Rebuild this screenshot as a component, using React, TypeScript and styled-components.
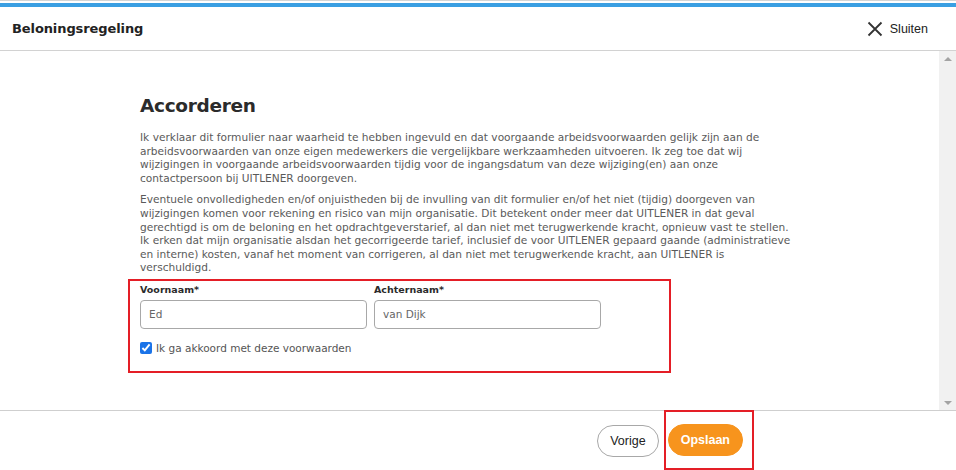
import React from "react";
import styled, { createGlobalStyle } from "styled-components";

const Global = createGlobalStyle`
  html, body { margin: 0; padding: 0; background: #fff; }
  body { font-family: "DejaVu Sans", sans-serif; }
  * { box-sizing: border-box; }
`;

const Page = styled.div`
  width: 956px;
  height: 470px;
  display: flex;
  flex-direction: column;
  overflow: hidden;
  border-top: 1px solid #d4d4d4;
`;

const Stripe = styled.div`
  height: 4px;
  margin-top: 2px;
  background: #3a9fe2;
  flex: none;
`;

const Header = styled.header`
  height: 44px;
  flex: none;
  display: flex;
  align-items: center;
  justify-content: space-between;
  padding: 0 28px 0 12px;
  border-bottom: 1px solid #d2d2d2;
`;

const Title = styled.h1`
  margin: 0;
  font-family: "DejaVu Sans", sans-serif;
  font-size: 13px;
  font-weight: 700;
  color: #222;
  letter-spacing: -0.1px;
`;

const CloseButton = styled.button`
  display: flex;
  align-items: center;
  gap: 7px;
  border: none;
  background: none;
  padding: 0;
  font-family: "Liberation Sans", Arial, sans-serif;
  font-size: 12.5px;
  color: #222;
  cursor: pointer;
`;

const Body = styled.div`
  flex: 1;
  display: flex;
  min-height: 0;
`;

const Content = styled.main`
  flex: 1;
  padding: 44px 0 0 140px;
`;

const Scrollbar = styled.div`
  width: 17px;
  flex: none;
  background: #f1f1f1;
  display: flex;
  flex-direction: column;
  justify-content: space-between;
  align-items: center;
  padding: 6px 0 5px;
`;

const Arrow = styled.div<{ $down?: boolean }>`
  width: 0;
  height: 0;
  border-left: 4px solid transparent;
  border-right: 4px solid transparent;
  ${(p) =>
    p.$down
      ? "border-top: 4px solid #a3a3a3;"
      : "border-bottom: 4px solid #a3a3a3;"}
`;

const Heading = styled.h2`
  margin: 0 0 15px;
  font-family: "DejaVu Sans", sans-serif;
  font-size: 18.5px;
  font-weight: 700;
  color: #2b2b2b;
  letter-spacing: -0.3px;
`;

const Paragraph = styled.p`
  margin: 0 0 8px;
  width: 652px;
  font-family: "DejaVu Sans", sans-serif;
  font-size: 10.6px;
  line-height: 13.6px;
  color: #5a5a5a;

  &:last-of-type {
    margin-bottom: 4px;
  }
`;

const FormBox = styled.section`
  width: 543px;
  height: 94px;
  margin-left: -12px;
  border: 2px solid #e41e26;
  padding: 3px 10px 0;
`;

const FieldRow = styled.div`
  display: flex;
  gap: 7px;
`;

const Field = styled.label`
  display: flex;
  flex-direction: column;
  gap: 4px;
  width: 227px;
`;

const Label = styled.span`
  font-family: "DejaVu Sans", sans-serif;
  font-size: 9.5px;
  font-weight: 600;
  color: #2b2b2b;
  line-height: 12px;
`;

const Input = styled.input`
  height: 29px;
  width: 100%;
  border: 1px solid #a8a8a8;
  border-radius: 4px;
  padding: 0 8px;
  font-family: "DejaVu Sans", sans-serif;
  font-size: 10.5px;
  color: #666;
  outline: none;
`;

const CheckRow = styled.label`
  display: flex;
  align-items: center;
  gap: 4px;
  margin-top: 13px;
  font-family: "DejaVu Sans", sans-serif;
  font-size: 10.5px;
  color: #555;
`;

const Check = styled.input`
  width: 12px;
  height: 12px;
  margin: 0;
  accent-color: #1a73e8;
`;

const Footer = styled.footer`
  height: 60px;
  flex: none;
  border-top: 1px solid #cfcfcf;
  display: flex;
  align-items: center;
  justify-content: flex-end;
  padding-right: 202px;
  gap: 5px;
`;

const PillButton = styled.button<{ $primary?: boolean }>`
  height: 32px;
  padding: 0 12px;
  border-radius: 16px;
  font-family: "Liberation Sans", Arial, sans-serif;
  font-size: 12.5px;
  font-weight: ${(p) => (p.$primary ? 700 : 400)};
  color: ${(p) => (p.$primary ? "#fff" : "#222")};
  background: ${(p) => (p.$primary ? "#f7941d" : "#fff")};
  border: 1px solid ${(p) => (p.$primary ? "#f7941d" : "#a8a8a8")};
  cursor: pointer;
`;

const Highlight = styled.div`
  border: 2px solid #e41e26;
  height: 60px;
  margin-top: -1px;
  padding: 0 9px 0 2px;
  display: flex;
  align-items: center;
`;

export default function App() {
  return (
    <>
      <Global />
      <Page>
        <Stripe />
        <Header>
          <Title>Beloningsregeling</Title>
          <CloseButton>
            <svg width="16" height="16" viewBox="0 0 16 16">
              <path d="M1.5 1.5 L14.5 14.5 M14.5 1.5 L1.5 14.5" stroke="#333" strokeWidth="1.8" fill="none" />
            </svg>
            Sluiten
          </CloseButton>
        </Header>
        <Body>
          <Content>
            <Heading>Accorderen</Heading>
            <Paragraph>
              Ik verklaar dit formulier naar waarheid te hebben ingevuld en dat voorgaande arbeidsvoorwaarden gelijk zijn aan de arbeidsvoorwaarden van onze eigen medewerkers die vergelijkbare werkzaamheden uitvoeren. Ik zeg toe dat wij wijzigingen in voorgaande arbeidsvoorwaarden tijdig voor de ingangsdatum van deze wijziging(en) aan onze contactpersoon bij UITLENER doorgeven.
            </Paragraph>
            <Paragraph>
              Eventuele onvolledigheden en/of onjuistheden bij de invulling van dit formulier en/of het niet (tijdig) doorgeven van wijzigingen komen voor rekening en risico van mijn organisatie. Dit betekent onder meer dat UITLENER in dat geval gerechtigd is om de beloning en het opdrachtgeverstarief, al dan niet met terugwerkende kracht, opnieuw vast te stellen. Ik erken dat mijn organisatie alsdan het gecorrigeerde tarief, inclusief de voor UITLENER gepaard gaande (administratieve en interne) kosten, vanaf het moment van corrigeren, al dan niet met terugwerkende kracht, aan UITLENER is verschuldigd.
            </Paragraph>
            <FormBox>
              <FieldRow>
                <Field>
                  <Label>Voornaam*</Label>
                  <Input defaultValue="Ed" />
                </Field>
                <Field>
                  <Label>Achternaam*</Label>
                  <Input defaultValue="van Dijk" />
                </Field>
              </FieldRow>
              <CheckRow>
                <Check type="checkbox" defaultChecked />
                Ik ga akkoord met deze voorwaarden
              </CheckRow>
            </FormBox>
          </Content>
          <Scrollbar>
            <Arrow />
            <Arrow $down />
          </Scrollbar>
        </Body>
        <Footer>
          <PillButton>Vorige</PillButton>
          <Highlight>
            <PillButton $primary>Opslaan</PillButton>
          </Highlight>
        </Footer>
      </Page>
    </>
  );
}
